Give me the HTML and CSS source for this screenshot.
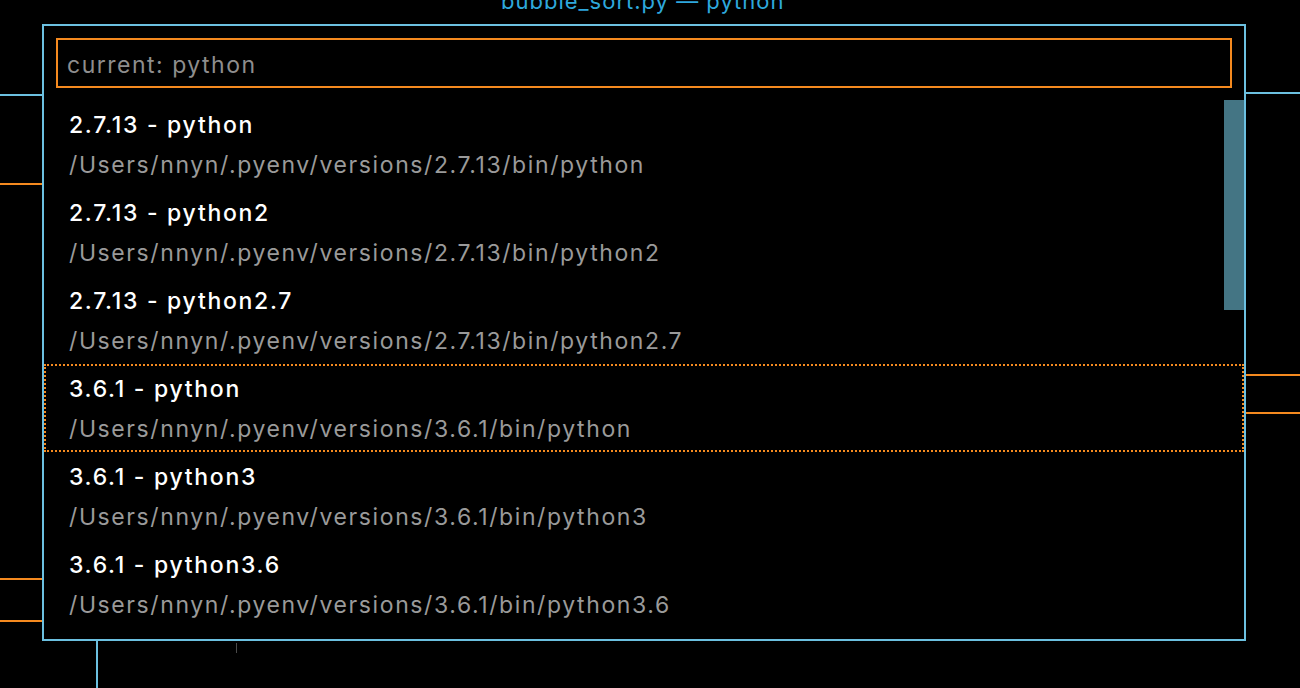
FILE: index.html
```html
<!DOCTYPE html>
<html lang="en">
<head>
    <meta charset="UTF-8">
    <title>Select Python Interpreter</title>
    <link rel="stylesheet" href="styles.css">
</head>
<body>
    <div class="workspace">
        <div class="tab-title">bubble_sort.py — python</div>
        <div class="edge edge-blue" style="left:0;top:94px;width:42px"></div>
        <div class="edge edge-blue" style="left:1246px;top:92px;width:54px"></div>
        <div class="edge edge-orange" style="left:0;top:183px;width:42px"></div>
        <div class="edge edge-orange" style="left:0;top:578px;width:42px"></div>
        <div class="edge edge-orange" style="left:0;top:620px;width:42px"></div>
        <div class="edge edge-orange" style="left:1246px;top:374px;width:54px"></div>
        <div class="edge edge-orange" style="left:1246px;top:412px;width:54px"></div>
        <div class="edge edge-vert" style="left:96px;top:641px;height:47px"></div>
        <div class="edge edge-gray" style="left:236px;top:643px;height:10px"></div>
    </div>

    <div class="select-panel">
        <div class="search">
            <input class="search-input" type="text" placeholder="current: python">
        </div>
        <ul class="choices" id="choices"></ul>
    </div>

    <script>
        const interpreters = [
            ['2.7.13', 'python'],
            ['2.7.13', 'python2'],
            ['2.7.13', 'python2.7'],
            ['3.6.1', 'python'],
            ['3.6.1', 'python3'],
            ['3.6.1', 'python3.6']
        ];
        const selected = 3;

        let html = '<li class="scrollbar"></li>';
        interpreters.forEach(function (item, i) {
            const version = item[0];
            const bin = item[1];
            html += '<li class="choice' + (i === selected ? ' selected' : '') + '">' +
                '<div class="choice-name">' + version + ' - ' + bin + '</div>' +
                '<div class="choice-path">/Users/nnyn/.pyenv/versions/' + version + '/bin/' + bin + '</div>' +
                '</li>';
        });
        document.getElementById('choices').innerHTML = html;
    </script>
</body>
</html>
```

FILE: styles.css
```css
html, body {
    margin: 0;
    height: 100%;
    background-color: #000;
    overflow: hidden;
    font-family: Inter, "Liberation Sans", sans-serif;
}
.workspace {
    position: relative;
    height: 100%;
}
.tab-title {
    position: absolute;
    left: 501px;
    top: -13px;
    color: #2ea8dc;
    font-size: 22px;
    letter-spacing: 1px;
    line-height: 28px;
    white-space: nowrap;
}
.edge {
    position: absolute;
    height: 2px;
}
.edge-blue {
    background-color: #6cc0e0;
}
.edge-orange {
    background-color: #f58a1f;
}
.edge-vert {
    width: 2px;
    background-color: #6cc0e0;
}
.edge-gray {
    width: 1px;
    background-color: #4a4a4a;
}
.select-panel {
    position: absolute;
    left: 42px;
    top: 24px;
    width: 1200px;
    height: 613px;
    border: 2px solid #6cc0e0;
    background-color: #000;
    display: flex;
    flex-direction: column;
}
.search {
    padding: 12px 12px 12px 12px;
}
.search-input {
    box-sizing: border-box;
    display: block;
    width: 100%;
    height: 50px;
    margin: 0;
    padding: 3px 9px 0;
    border: 2px solid #f58a1f;
    background-color: #000;
    outline: none;
    font-family: Inter, "Liberation Sans", sans-serif;
    font-size: 23px;
    letter-spacing: 1.5px;
    color: #ddd;
}
.search-input::placeholder {
    color: #8e8e8e;
}
.choices {
    position: relative;
    flex: 1;
    margin: 0;
    padding: 0;
    list-style: none;
    overflow: hidden;
}
.scrollbar {
    position: absolute;
    top: 0;
    right: 0;
    width: 20px;
    height: 210px;
    background-color: #447584;
}
.choice {
    box-sizing: border-box;
    height: 88px;
    padding: 3px 0 1px 23px;
    border: 2px solid transparent;
    font-size: 23px;
    line-height: 40px;
    white-space: nowrap;
}
.choice.selected {
    border: 2px dotted #f58a1f;
}
.choice-name {
    color: #fff;
    font-weight: 500;
    letter-spacing: 1.7px;
}
.choice-path {
    color: #9a9a9a;
    letter-spacing: 1.6px;
}
```
